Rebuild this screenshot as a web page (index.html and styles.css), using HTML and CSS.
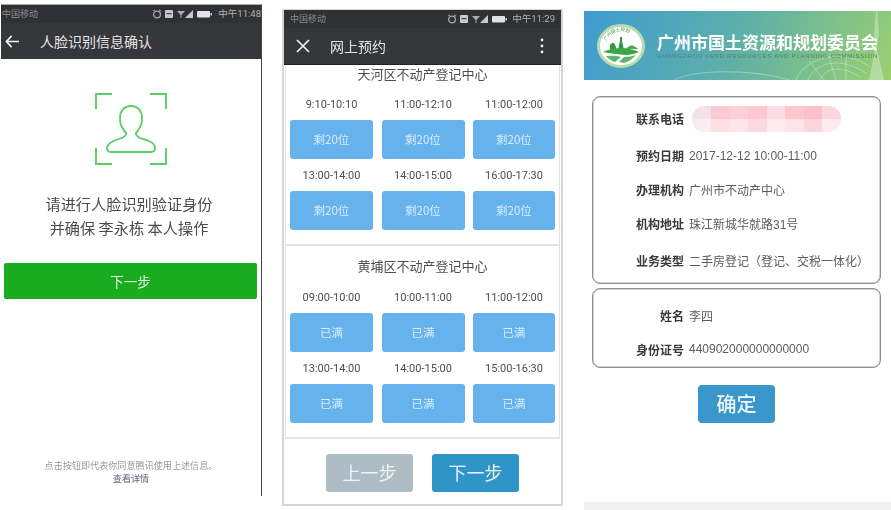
FILE: index.html
```html
<!DOCTYPE html>
<html lang="zh-CN">
<head>
    <meta charset="UTF-8">
    <title>网上预约流程</title>
    <link rel="stylesheet" href="styles.css">
</head>
<body>
    <svg class="defs" width="0" height="0">
        <symbol id="status-icons" viewBox="0 0 62 10">
            <path d="M1 2 L3 0.8 M9 2 L7 0.8" stroke="#aaa" stroke-width="1"/>
            <circle cx="5" cy="5.5" r="3.4" fill="none" stroke="#aaa" stroke-width="1.3"/>
            <rect x="13" y="1" width="8" height="8" rx="1" fill="#c8c8c8"/>
            <rect x="14.5" y="4" width="5" height="1.2" fill="#444"/>
            <path d="M25 2 H33 L29.5 6 V9 H28.5 V6Z" fill="#aaa"/>
            <path d="M33 9 L41 1 V9Z" fill="#c8c8c8"/>
            <rect x="45" y="2" width="13" height="6.5" rx="1" fill="#e2e2e2"/>
            <rect x="58.5" y="4" width="1.5" height="2.5" fill="#ccc"/>
        </symbol>
    </svg>

    <div class="screens">
        <section class="phone face-phone">
            <div class="status">
                <span class="carrier">中国移动</span>
                <span class="status-right">
                    <svg class="status-icons"><use href="#status-icons"/></svg>
                    <span>中午11:48</span>
                </span>
            </div>
            <div class="navbar">
                <svg class="nav-icon back-icon" viewBox="0 0 16 14">
                    <path d="M7 1 L1.5 7 L7 13 M2 7 H15" fill="none" stroke="#f2f2f2" stroke-width="1.8"/>
                </svg>
                <span class="nav-title">人脸识别信息确认</span>
            </div>
            <div class="face-body">
                <svg class="face-icon" viewBox="0 0 72 72">
                    <path d="M1 16V1H17 M55 1H71V16 M1 55V71H17 M71 55V71H55" fill="none" stroke="#58ce63" stroke-width="1.9"/>
                    <path d="M36 13 C43 13 47 18 47 25 C47 29 47 31 45.5 33 C44 36 43 38 41 40 C40 42 42 43 45 45 C52 47 60 49 60 55 C60 58 58 59 56 59 H16 C14 59 12 58 12 55 C12 50 20 47 27 45 C30 43 32 42 31 40 C29 38 28 36 26.5 33 C25 31 25 29 25 25 C25 18 29 13 36 13Z" fill="none" stroke="#58ce63" stroke-width="1.8"/>
                </svg>
                <p class="face-text">请进行人脸识别验证身份<br>并确保 李永栋 本人操作</p>
                <div class="green-btn">下一步</div>
                <p class="face-note">点击按钮即代表你同意腾讯使用上述信息。<br><span class="note-link">查看详情</span></p>
            </div>
        </section>

        <section class="phone booking-phone">
            <div class="status">
                <span class="carrier">中国移动</span>
                <span class="status-right">
                    <svg class="status-icons"><use href="#status-icons"/></svg>
                    <span>中午11:29</span>
                </span>
            </div>
            <div class="navbar">
                <svg class="nav-icon close-icon" viewBox="0 0 14 14">
                    <path d="M1 1 L13 13 M13 1 L1 13" stroke="#f2f2f2" stroke-width="1.7"/>
                </svg>
                <span class="nav-title">网上预约</span>
                <svg class="more-icon" viewBox="0 0 4 16">
                    <circle cx="2" cy="2" r="1.4" fill="#eee"/>
                    <circle cx="2" cy="8" r="1.4" fill="#eee"/>
                    <circle cx="2" cy="14" r="1.4" fill="#eee"/>
                </svg>
            </div>
            <div class="booking-body">
                <div class="center-box first-box">
                    <h3 class="center-name">天河区不动产登记中心</h3>
                    <div class="slots">
                        <div class="slot"><span class="slot-time">9:10-10:10</span><div class="slot-btn">剩20位</div></div>
                        <div class="slot"><span class="slot-time">11:00-12:10</span><div class="slot-btn">剩20位</div></div>
                        <div class="slot"><span class="slot-time">11:00-12:00</span><div class="slot-btn">剩20位</div></div>
                        <div class="slot"><span class="slot-time">13:00-14:00</span><div class="slot-btn">剩20位</div></div>
                        <div class="slot"><span class="slot-time">14:00-15:00</span><div class="slot-btn">剩20位</div></div>
                        <div class="slot"><span class="slot-time">16:00-17:30</span><div class="slot-btn">剩20位</div></div>
                    </div>
                </div>
                <div class="center-box second-box">
                    <h3 class="center-name">黄埔区不动产登记中心</h3>
                    <div class="slots">
                        <div class="slot"><span class="slot-time">09:00-10:00</span><div class="slot-btn">已满</div></div>
                        <div class="slot"><span class="slot-time">10:00-11:00</span><div class="slot-btn">已满</div></div>
                        <div class="slot"><span class="slot-time">11:00-12:00</span><div class="slot-btn">已满</div></div>
                        <div class="slot"><span class="slot-time">13:00-14:00</span><div class="slot-btn">已满</div></div>
                        <div class="slot"><span class="slot-time">14:00-15:00</span><div class="slot-btn">已满</div></div>
                        <div class="slot"><span class="slot-time">15:00-16:30</span><div class="slot-btn">已满</div></div>
                    </div>
                </div>
                <div class="step-btns">
                    <div class="step-btn step-prev">上一步</div>
                    <div class="step-btn step-next">下一步</div>
                </div>
            </div>
        </section>

        <section class="confirm">
            <div class="banner">
                <svg class="banner-art" viewBox="0 0 307 69">
                    <g fill="none" stroke="#fff" stroke-opacity=".32">
                        <path d="M212 69 C222 44 262 38 286 56"/>
                        <path d="M224 69 C232 50 258 46 282 62"/>
                        <path d="M236 69 C242 56 258 54 276 66"/>
                        <path d="M90 69 C110 58 170 58 205 69"/>
                        <path d="M225 50 L240 69 M245 45 L252 69 M262 46 L262 69"/>
                    </g>
                    <path d="M293.500 0 L295 22 L293 38 L300 69 H285 L291 38 L290 22 L292 0Z" fill="#fff" fill-opacity=".3"/>
                </svg>
                <svg class="logo" viewBox="0 0 48 44">
                    <defs>
                        <path id="logo-arc" d="M9 21 A15 14 0 0 1 39 21"/>
                    </defs>
                    <ellipse cx="24" cy="22" rx="22.500" ry="20.500" fill="#fff" stroke="#b5dcae" stroke-width="3"/>
                    <text class="logo-text"><textPath href="#logo-arc" startOffset="4">广州国土规划</textPath></text>
                    <path d="M23 26 V13 H25 V26Z M21 26 L23 17 H25 L27 26Z M13 26 V21 L15 19 H17 L19 23 V26Z" fill="#2d9a41"/>
                    <path d="M29 25 Q34 18 41 25Z" fill="#46ad55"/>
                    <path d="M6 28 Q24 20 42 28 Q36 31 30 31 Q16 30 6 28Z" fill="#3aa648"/>
                    <path d="M9 32 Q18 31 24 33 L18 38 Q12 36 9 32Z M27 33 Q34 33 39 31 Q35 36 27 39 Q24 38 22 38Z" fill="#58b865"/>
                </svg>
                <div class="banner-text">
                    <div class="banner-title">广州市国土资源和规划委员会</div>
                    <div class="banner-sub">GUANGZHOU LAND RESOURCES AND PLANNING COMMISSION</div>
                </div>
            </div>

            <div class="info-card card-main">
                <div class="info-row">
                    <span class="info-label">联系电话</span>
                    <div class="mosaic">
                        <i style="background:#f3e3e5"></i><i style="background:#fcc9d2"></i><i style="background:#fdd0d8"></i><i style="background:#fdc8d1"></i><i style="background:#fddde3"></i><i style="background:#fcc6cf"></i><i style="background:#fbc0cb"></i><i style="background:#fdd5dc"></i>
                        <i style="background:#f8eef0"></i><i style="background:#fddfe4"></i><i style="background:#fde6ea"></i><i style="background:#fdd9df"></i><i style="background:#fee9ed"></i><i style="background:#fee3e8"></i><i style="background:#fdd6dd"></i><i style="background:#feeaee"></i>
                    </div>
                </div>
                <div class="info-row row-date">
                    <span class="info-label">预约日期</span>
                    <span class="info-value">2017-12-12 10:00-11:00</span>
                </div>
                <div class="info-row row-org">
                    <span class="info-label">办理机构</span>
                    <span class="info-value">广州市不动产中心</span>
                </div>
                <div class="info-row row-org">
                    <span class="info-label">机构地址</span>
                    <span class="info-value">珠江新城华就路31号</span>
                </div>
                <div class="info-row row-date">
                    <span class="info-label">业务类型</span>
                    <span class="info-value">二手房登记（登记、交税一体化）</span>
                </div>
            </div>

            <div class="info-card card-person">
                <div class="info-row">
                    <span class="info-label">姓名</span>
                    <span class="info-value">李四</span>
                </div>
                <div class="info-row row-org">
                    <span class="info-label">身份证号</span>
                    <span class="info-value">440902000000000000</span>
                </div>
            </div>

            <div class="ok-wrap"><div class="ok-btn">确定</div></div>
            <div class="confirm-foot"></div>
        </section>
    </div>
</body>
</html>
```

FILE: styles.css
```css
html, body {
    margin: 0;
    padding: 0;
    background: #fff;
}
body {
    width: 891px;
    height: 510px;
    overflow: hidden;
    font-family: "Noto Sans CJK SC", "Liberation Sans", sans-serif;
}
.defs {
    display: block;
    height: 0;
}
.screens {
    display: flex;
    align-items: flex-start;
    height: 510px;
    filter: blur(0.6px);
}
.phone {
    display: flex;
    flex-direction: column;
    box-sizing: border-box;
}

/* status + nav bar */
.status {
    display: flex;
    justify-content: space-between;
    align-items: center;
    background: #303134;
    color: #8b8b8b;
    font-size: 9px;
    line-height: 10px;
}
.status-right {
    display: flex;
    align-items: center;
    color: #b4b4b4;
    font-family: "Roboto", "Noto Sans CJK SC", sans-serif;
    font-size: 9.5px;
    gap: 3px;
}
.status-icons {
    width: 62px;
    height: 10px;
}
.navbar {
    display: flex;
    align-items: center;
    background: #36373b;
    color: #e4e4e4;
    font-size: 14px;
}
.nav-icon {
    flex: none;
}

/* left screen */
.face-phone {
    width: 261px;
    height: 492px;
    margin: 4px 0 0 1px;
    border-top: 1px solid #aaa;
    border-right: 1px solid #444;
}
.face-phone .status {
    height: 18px;
    padding: 0 0 0 1px;
}
.face-phone .status-right {
    gap: 4px;
}
.face-phone .navbar {
    height: 36px;
}
.back-icon {
    width: 15px;
    height: 13px;
    margin: 0 20px 0 4px;
}
.face-body {
    flex: 1;
    display: flex;
    flex-direction: column;
    align-items: center;
    background: #fff;
}
.face-icon {
    width: 72px;
    height: 72px;
    margin: 34px 0 0 -1px;
}
.face-text {
    margin: 26px 0 0 -4px;
    color: #4a4a4a;
    font-size: 15.2px;
    line-height: 24px;
    text-align: center;
}
.green-btn {
    align-self: flex-start;
    width: 253px;
    height: 36px;
    margin: 24px 0 0 3px;
    border-radius: 2px;
    background: #19ac1f;
    color: #e6f6e4;
    font-size: 13.5px;
    line-height: 36px;
    text-align: center;
}
.face-note {
    margin: 160px 0 0;
    color: #999;
    font-size: 9.1px;
    line-height: 13px;
    text-align: center;
}
.note-link {
    color: #5a6480;
}

/* middle screen */
.booking-phone {
    width: 281px;
    height: 497px;
    margin: 9px 0 0 20px;
    border: 1px solid #d6d6d6;
    border-width: 1px 2px 2px;
}
.booking-phone .status {
    height: 18px;
    padding: 0 6px 0 6px;
}
.booking-phone .navbar {
    height: 37px;
    border-bottom: 1px solid #222;
    box-sizing: border-box;
}
.close-icon {
    width: 14px;
    height: 14px;
    margin: 0 20px 0 12px;
}
.more-icon {
    width: 4px;
    height: 16px;
    margin-left: auto;
    margin-right: 17px;
}
.booking-body {
    flex: 1;
    display: flex;
    flex-direction: column;
    background: #fff;
}
.center-box {
    margin: 0 1px;
    padding: 0 4px;
    border: 1px solid #e4e4e4;
    border-top: 0;
    box-sizing: border-box;
}
.first-box {
    height: 180px;
}
.second-box {
    height: 194px;
    border-top: 1px solid #e4e4e4;
    border-bottom-width: 2px;
}
.center-name {
    margin: 0;
    color: #4d4d4d;
    font-size: 13px;
    font-weight: 400;
    line-height: 18px;
    text-align: center;
}
.second-box .center-name {
    margin-top: 11px;
}
.slots {
    display: grid;
    grid-template-columns: 83px 83px 82px;
    column-gap: 8.5px;
    row-gap: 9px;
    margin-top: 14px;
}
.second-box .slots {
    margin-top: 15px;
}
.slot {
    display: flex;
    flex-direction: column;
    align-items: center;
}
.slot-time {
    height: 16px;
    margin-bottom: 7px;
    color: #4d4d4d;
    font-family: "Roboto", sans-serif;
    font-size: 11px;
    line-height: 16px;
}
.slot-btn {
    width: 100%;
    height: 39px;
    border-radius: 3px;
    background: #65b2ec;
    color: #d9ecfb;
    font-size: 11.5px;
    line-height: 39px;
    text-align: center;
}
.step-btns {
    display: flex;
    justify-content: center;
    gap: 19px;
    margin-top: 15px;
}
.step-btn {
    width: 87px;
    height: 38px;
    border-radius: 3px;
    color: #eef4f8;
    font-size: 18px;
    line-height: 36px;
    text-align: center;
}
.step-prev {
    background: #aebcc4;
}
.step-next {
    background: #2f95c8;
}

/* right screen */
.confirm {
    width: 307px;
    height: 499px;
    margin: 11px 0 0 21px;
    display: flex;
    flex-direction: column;
    position: relative;
}
.banner {
    position: relative;
    display: flex;
    align-items: center;
    height: 69px;
    padding-left: 13px;
    background: linear-gradient(115deg, #3f9bd2 0%, #5eb0a8 50%, #9bd06f 100%);
}
.banner-art {
    position: absolute;
    left: 0;
    top: 0;
    width: 307px;
    height: 69px;
}
.logo {
    position: relative;
    flex: none;
    width: 48px;
    height: 44px;
    margin-top: 2px;
}
.logo-text {
    fill: #3a8f4a;
    font-size: 4.5px;
}
.banner-text {
    position: relative;
    margin-left: 12px;
    margin-top: 1px;
}
.banner-title {
    color: #fff;
    font-size: 17px;
    font-weight: 700;
    line-height: 20px;
    white-space: nowrap;
}
.banner-sub {
    color: #54806f;
    font-family: "Liberation Sans", sans-serif;
    font-size: 6px;
    line-height: 8px;
    letter-spacing: .78px;
    white-space: nowrap;
}
.info-card {
    box-sizing: border-box;
    width: 289px;
    margin-left: 8px;
    border: 1px solid #8e8e8e;
    box-shadow: inset 0 0 0 .5px #aaa;
    border-radius: 8px;
}
.card-main {
    height: 190px;
    margin-top: 16px;
    padding-top: 14px;
}
.card-person {
    height: 80px;
    margin-top: 4px;
    padding-top: 18px;
}
.info-row {
    display: flex;
    align-items: center;
    height: 16px;
}
.row-date {
    margin-top: 21px;
}
.row-org {
    margin-top: 18px;
}
.info-label {
    flex: none;
    width: 91px;
    margin-right: 5px;
    color: #3a3a3a;
    font-size: 12px;
    font-weight: 700;
    text-align: right;
}
.info-value {
    color: #5c5c5c;
    font-family: "Liberation Sans", "Noto Sans CJK SC", sans-serif;
    font-size: 12px;
    white-space: nowrap;
}
.mosaic {
    display: grid;
    grid-template-columns: repeat(8, 1fr);
    grid-template-rows: 13px 13px;
    flex: none;
    width: 149px;
    margin-left: 3px;
    border-radius: 12px;
    overflow: hidden;
}
.ok-wrap {
    display: flex;
    padding-left: 114px;
    margin-top: 17px;
}
.ok-btn {
    width: 77px;
    height: 38px;
    border-radius: 4px;
    background: #3a97cc;
    color: #eef7fb;
    font-size: 20px;
    font-weight: 500;
    line-height: 37px;
    text-align: center;
}
.confirm-foot {
    margin-top: 79px;
    height: 8px;
    background: #f1f1f1;
}
```
